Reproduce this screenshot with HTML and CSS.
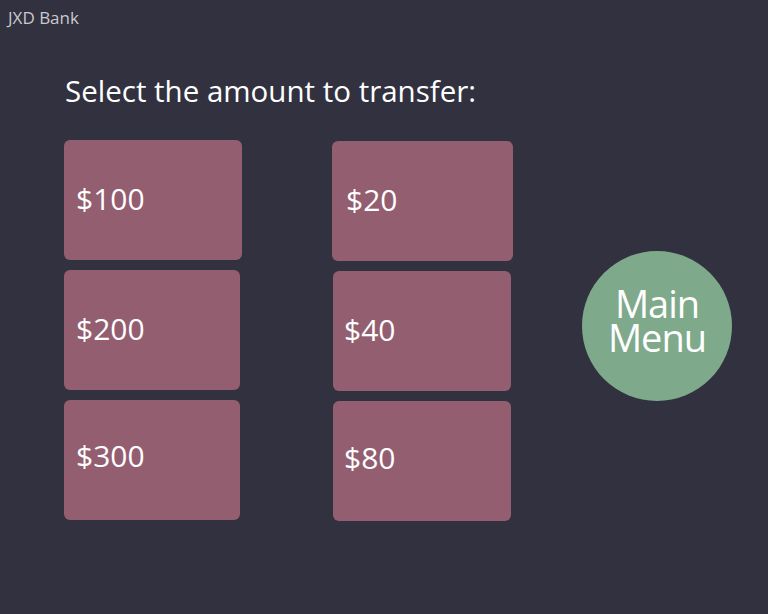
FILE: index.html
```html
<!DOCTYPE html>
<html>
<head>
<meta charset="utf-8">
<link rel="stylesheet" href="styles.css">
</head>
<body>
<div class="brand">JXD Bank</div>
<main class="screen">
  <h1 class="title">Select the amount to transfer:</h1>
  <div class="layout">
    <div class="col col-left">
      <div class="card w178">$100</div>
      <div class="card w176">$200</div>
      <div class="card w176 up">$300</div>
    </div>
    <div class="col col-right">
      <div class="card w181 pad14">$20</div>
      <div class="card w178 shift">$40</div>
      <div class="card w178 shift up-sm">$80</div>
    </div>
    <div class="menu-wrap">
      <div class="menu">
        <span class="menu-line">Main</span>
        <span class="menu-line">Menu</span>
      </div>
    </div>
  </div>
</main>
</body>
</html>
```
FILE: styles.css
```css
html, body {
  margin: 0;
  height: 100%;
}
body {
  background: #32313f;
  font-family: "Open Sans", "DejaVu Sans", sans-serif;
  color: #fff;
  overflow: hidden;
}
.brand {
  padding: 8px 0 0 8px;
  height: 20px;
  font-size: 17px;
  line-height: 20px;
  color: #c9c9cf;
}
.screen {
  padding-left: 64px;
}
.title {
  margin: 46px 0 0 1px;
  font-size: 29.5px;
  line-height: 34px;
  font-weight: 400;
}
.layout {
  display: flex;
  margin-top: 32px;
}
.col {
  display: flex;
  flex-direction: column;
  gap: 10px;
}
.col-right {
  margin-left: 90px;
  margin-top: 1px;
}
.card {
  height: 120px;
  background: #935e70;
  border-radius: 6px;
  display: flex;
  align-items: center;
  padding: 0 0 3px 12px;
  box-sizing: border-box;
  font-size: 30px;
}
.up { padding-bottom: 10px; }
.up-sm { padding-bottom: 7px; }
.pad14 { padding-left: 14px; }
.shift { margin-left: 1px; padding-left: 11px; }
.w176 { width: 176px; }
.w178 { width: 178px; }
.w181 { width: 181px; }
.menu-wrap {
  margin-left: 69px;
  padding-top: 111px;
}
.menu {
  width: 150px;
  height: 150px;
  border-radius: 50%;
  background: #7ea98b;
  display: flex;
  flex-direction: column;
  align-items: center;
  justify-content: center;
  padding-bottom: 12px;
  box-sizing: border-box;
  font-size: 38px;
  letter-spacing: -1px;
}
.menu-line {
  display: block;
  line-height: 34px;
}
```
